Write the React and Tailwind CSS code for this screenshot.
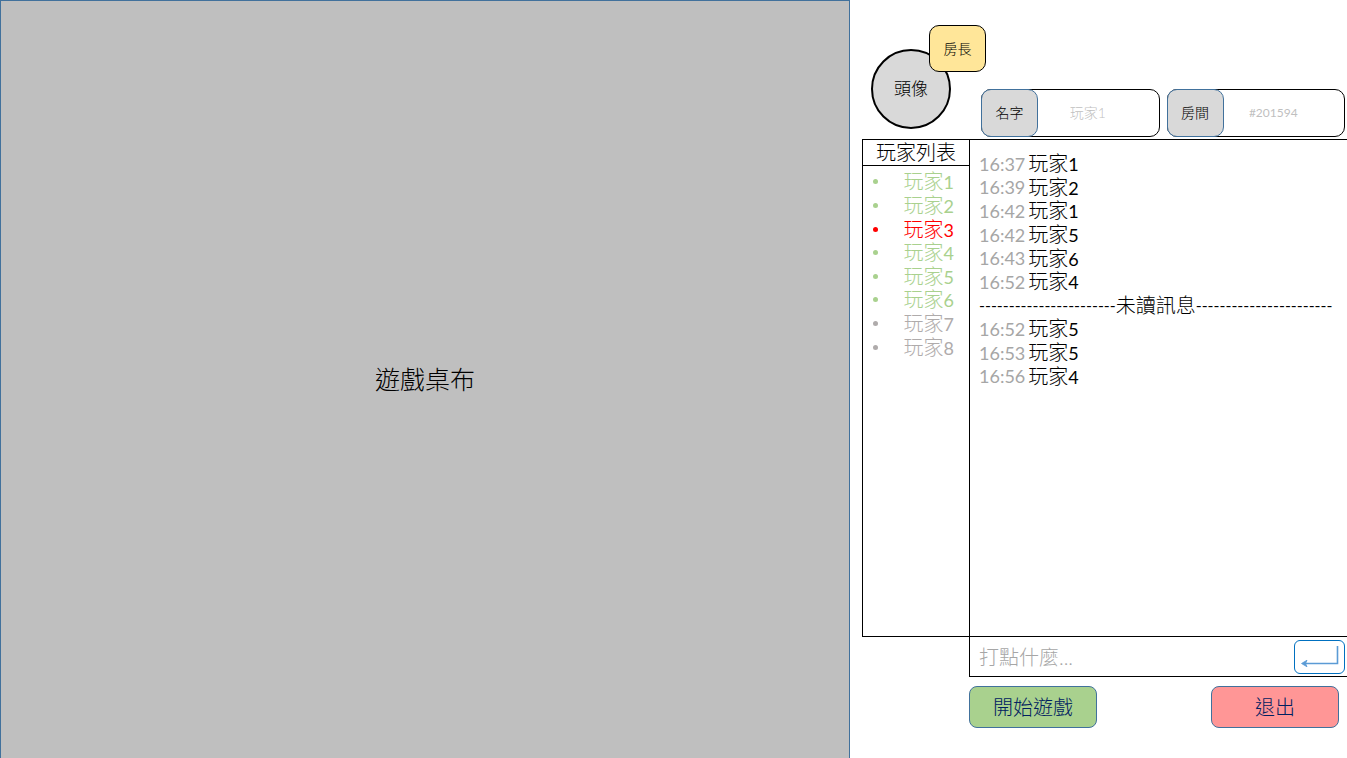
import React from "react";

const players = [
  { number: 1, tone: "text-[#a9d18e]" },
  { number: 2, tone: "text-[#a9d18e]" },
  { number: 3, tone: "text-[#ff0000]" },
  { number: 4, tone: "text-[#a9d18e]" },
  { number: 5, tone: "text-[#a9d18e]" },
  { number: 6, tone: "text-[#a9d18e]" },
  { number: 7, tone: "text-[#afabab]" },
  { number: 8, tone: "text-[#afabab]" },
];

const readMessages = [
  { time: "16:37", number: 1 },
  { time: "16:39", number: 2 },
  { time: "16:42", number: 1 },
  { time: "16:42", number: 5 },
  { time: "16:43", number: 6 },
  { time: "16:52", number: 4 },
];

const unreadMessages = [
  { time: "16:52", number: 5 },
  { time: "16:53", number: 5 },
  { time: "16:56", number: 4 },
];

const dashes = "-".repeat(23);

function PlayerName({ number }) {
  return (
    <span>
      玩家<span className="text-lg/5 font-normal">{number}</span>
    </span>
  );
}

function Message({ time, number }) {
  return (
    <li className="flex items-center gap-[3px]">
      <time className="text-lg/5 font-normal text-[#a6a6a6]">{time}</time>
      <PlayerName number={number} />
    </li>
  );
}

function Field({ id, label, value, size }) {
  return (
    <div className="flex h-12 min-w-0 flex-1 rounded-[10px] border border-black bg-white">
      <label
        htmlFor={id}
        className="-m-px flex w-[57px] shrink-0 items-center justify-center rounded-[10px] border border-[#41719c] bg-[#d9d9d9] text-sm"
      >
        {label}
      </label>
      <input
        id={id}
        defaultValue={value}
        className={`w-full min-w-0 bg-transparent pr-5 text-center text-[#bfbfbf] outline-none ${size}`}
      />
    </div>
  );
}

function EnterIcon() {
  return (
    <svg viewBox="0 0 49 32" className="h-full w-full" fill="none" stroke="#5b9bd5" aria-hidden="true">
      <path d="M42.5 5V22.5H8" strokeWidth="1.6" />
      <path d="M12 19.2L6.5 22.5L12 25.8L10.5 22.5Z" fill="#5b9bd5" strokeWidth="0.8" />
    </svg>
  );
}

export default function App() {
  return (
    <div className="grid min-h-screen grid-cols-[850fr_497fr] bg-white font-['Lato','Noto_Sans_CJK_TC',sans-serif] font-light text-black">
      <main className="flex items-center justify-center border border-b-0 border-[#41719c] bg-[#bfbfbf]">
        <h1 className="text-[25px]">遊戲桌布</h1>
      </main>

      <aside className="flex min-w-0 flex-col pl-3">
        <header className="flex h-[139px] items-end gap-[30px] pr-0.5 pb-0.5 pl-[9px]">
          <div className="relative mb-2 flex size-20 shrink-0 items-center justify-center rounded-full border-2 border-black bg-[#d9d9d9] text-[17px]">
            頭像
            <span className="absolute -top-[26px] left-14 flex h-[47px] w-[57px] items-center justify-center rounded-[10px] border border-black bg-[#ffe699] text-sm">
              房長
            </span>
          </div>
          <div className="flex min-w-0 flex-1 gap-[7px]">
            <Field id="player-name" label="名字" value="玩家1" size="text-sm font-light" />
            <Field id="room" label="房間" value="#201594" size="text-xs font-normal" />
          </div>
        </header>

        <div className="flex flex-1 border-y border-black text-xl/5">
          <section className="w-[107px] shrink-0 border-l border-black">
            <h2 className="border-b border-black pt-[2px] pb-[3px] text-center leading-5">玩家列表</h2>
            <ul className="mt-1 grid min-h-[189px] auto-rows-fr items-center px-2.5">
              {players.map((p) => (
                <li key={p.number} className={`flex items-center justify-between pr-[5px] ${p.tone}`}>
                  <span className="size-[5px] rounded-full bg-current" />
                  <PlayerName number={p.number} />
                </li>
              ))}
            </ul>
          </section>

          <section className="min-w-0 flex-1 border-l border-black px-[9px] pt-3">
            <ul className="grid min-h-[236px] auto-rows-fr items-center">
              {readMessages.map((m, i) => (
                <Message key={i} {...m} />
              ))}
              <li className="flex items-center whitespace-nowrap">
                <span className="text-base/5 font-normal">{dashes}</span>
                未讀訊息
                <span className="text-base/5 font-normal">{dashes}</span>
              </li>
              {unreadMessages.map((m, i) => (
                <Message key={i} {...m} />
              ))}
            </ul>
          </section>
        </div>

        <form
          className="ml-[107px] flex h-10 items-center border-b border-l border-black pr-0.5 pl-[9px]"
          onSubmit={(e) => e.preventDefault()}
        >
          <input
            aria-label="訊息"
            placeholder="打點什麼..."
            className="min-w-0 flex-1 text-xl/6 outline-none placeholder:text-[#a6a6a6]"
          />
          <button
            type="submit"
            aria-label="送出"
            className="h-[34px] w-[51px] shrink-0 rounded-md border border-[#0070c0] bg-white"
          >
            <EnterIcon />
          </button>
        </form>

        <div className="ml-[107px] flex justify-between pt-[9px] pr-2 pb-[30px] text-xl/5 text-[#002060]">
          <button type="button" className="h-[42px] w-32 rounded-lg border border-[#41719c] bg-[#a9d18e]">
            開始遊戲
          </button>
          <button type="button" className="h-[42px] w-32 rounded-lg border border-[#41719c] bg-[#ff9696]">
            退出
          </button>
        </div>
      </aside>
    </div>
  );
}
